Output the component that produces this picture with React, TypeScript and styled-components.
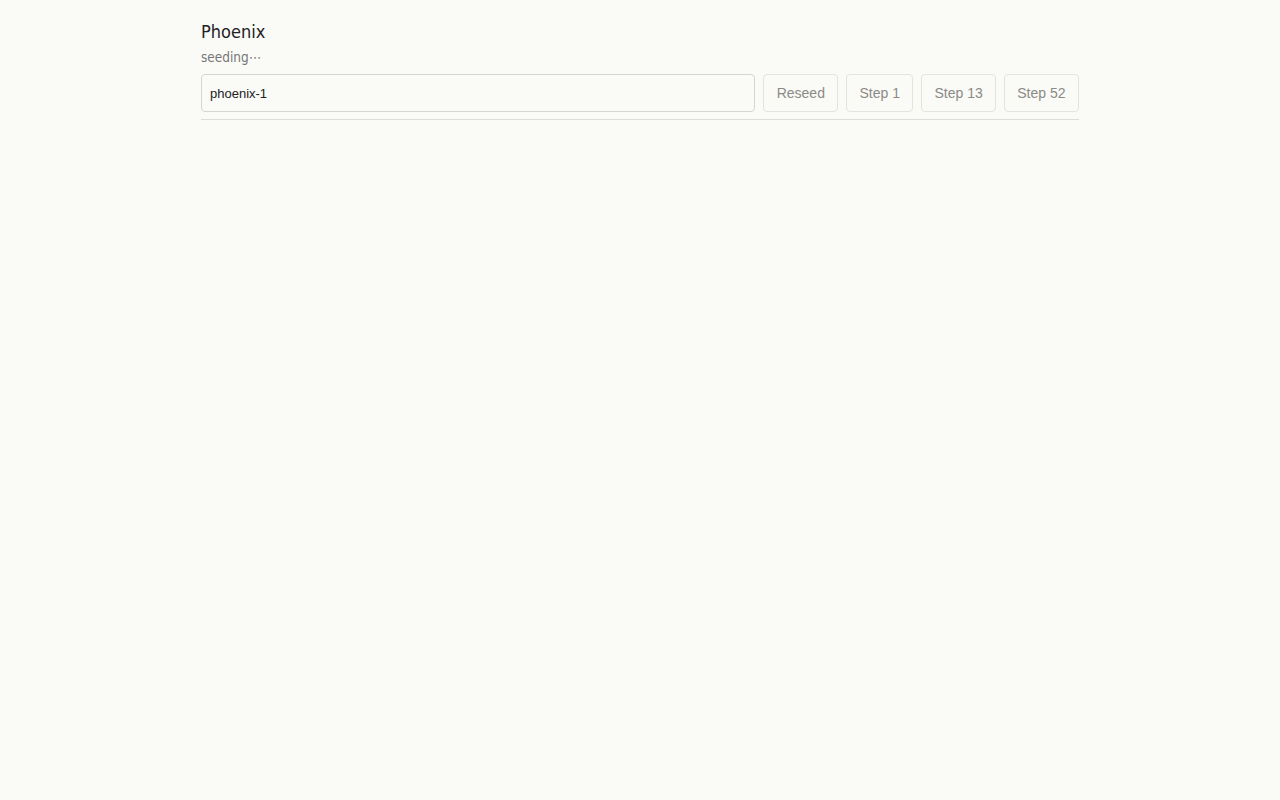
import styled, { createGlobalStyle } from 'styled-components';

const GlobalStyle = createGlobalStyle`
  html, body {
    margin: 0;
    padding: 0;
    background: #fafaf7;
  }
  body {
    font-family: 'Liberation Sans', Arial, sans-serif;
    color: #222;
  }
`;

const Page = styled.main`
  width: 878px;
  margin: 0 auto;
  padding-top: 20px;
`;

const Title = styled.h1`
  font-family: 'DejaVu Sans Condensed', 'DejaVu Sans', sans-serif;
  font-stretch: condensed;
  font-weight: 400;
  font-size: 18px;
  line-height: 24px;
  color: #222;
  margin: 0;
`;

const Status = styled.p`
  font-family: 'DejaVu Sans Condensed', 'DejaVu Sans', sans-serif;
  font-stretch: condensed;
  font-size: 13.5px;
  line-height: 18px;
  color: #777;
  margin: 4px 0 8px;
`;

const Toolbar = styled.div`
  display: flex;
  gap: 7.5px;
  padding-bottom: 7px;
  border-bottom: 1px solid #dddcd6;
`;

const SeedInput = styled.input`
  flex: 1;
  height: 38px;
  box-sizing: border-box;
  padding: 0 8px;
  margin-right: 0.5px;
  border: 1px solid #d6d6d0;
  border-radius: 4px;
  background: #fafaf7;
  font-family: 'Liberation Sans', Arial, sans-serif;
  font-size: 13px;
  color: #222;
  outline: none;
`;

const Button = styled.button`
  height: 38px;
  box-sizing: border-box;
  padding: 0 12.5px;
  border: 1px solid #e4e4de;
  border-radius: 4px;
  background: #fafaf7;
  font-family: 'Liberation Sans', Arial, sans-serif;
  font-size: 14px;
  color: #8a8a86;
  cursor: pointer;
`;

const steps = [1, 13, 52];

export default function App() {
  return (
    <>
      <GlobalStyle />
      <Page>
        <Title>Phoenix</Title>
        <Status>seeding⋯</Status>
        <Toolbar>
          <SeedInput defaultValue="phoenix-1" />
          <Button>Reseed</Button>
          {steps.map((n) => (
            <Button key={n}>Step {n}</Button>
          ))}
        </Toolbar>
      </Page>
    </>
  );
}
